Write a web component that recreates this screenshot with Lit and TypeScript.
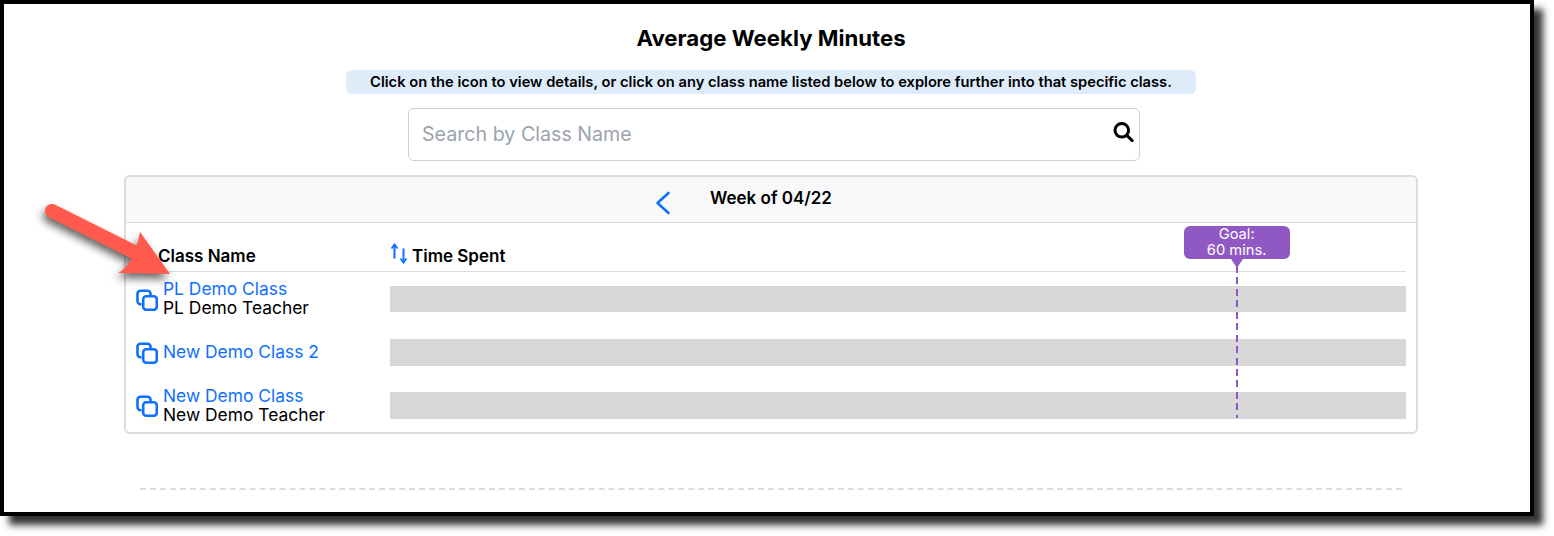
import { LitElement, html, css, svg } from "lit";
import { customElement } from "lit/decorators.js";

const BLUE = "#0f6fff";
const GOAL_MINS = 60;
const SCALE_MINS = 72;

const classes = [
  { name: "PL Demo Class", teacher: "PL Demo Teacher" },
  { name: "New Demo Class 2", teacher: "" },
  { name: "New Demo Class", teacher: "New Demo Teacher" },
];

const copyIcon = svg`
  <svg class="copy" viewBox="0 0 22 22" width="22" height="22" fill="none" stroke=${BLUE} stroke-width="2.6">
    <path d="M5.5 15.2H4.4A2.9 2.9 0 0 1 1.5 12.3V4.6A2.9 2.9 0 0 1 4.4 1.7H11.6A2.9 2.9 0 0 1 14.5 4.6V7" />
    <rect x="7.2" y="7.2" width="13.6" height="13.6" rx="3" />
  </svg>`;

const sortIcon = svg`
  <svg class="sort" viewBox="0 0 18 21" width="18" height="21" fill="none" stroke=${BLUE} stroke-width="2">
    <path d="M4.5 15.5V1.5" />
    <path d="M1.5 5.5L4.5 1.5L7.5 5.5" stroke-width="1.8" />
    <path d="M13.5 5.5v14" />
    <path d="M10.5 15.5L13.5 19.5L16.5 15.5" stroke-width="1.8" />
  </svg>`;

const searchIcon = svg`
  <svg class="search-icon" viewBox="0 0 21 20" width="21" height="20" fill="none" stroke="#000" stroke-width="3">
    <circle cx="8.8" cy="8.3" r="6.8" />
    <path d="M13.8 13.4l5.4 5.2" stroke-linecap="round" />
  </svg>`;

const chevron = svg`
  <svg class="chevron" viewBox="0 0 16 24" width="16" height="24" fill="none" stroke=${BLUE} stroke-width="2.6">
    <path d="M13.5 2L2.5 12l11 10" stroke-linecap="round" stroke-linejoin="round" />
  </svg>`;

const arrow = svg`
  <svg class="arrow" viewBox="0 0 140 90" width="140" height="90">
    <path d="M12 11L106 58" stroke="#ff5a4d" stroke-width="14" stroke-linecap="round" />
    <path d="M100 32L130 74L78 73Q94 65 100 32Z" fill="#ff5a4d" />
  </svg>`;

@customElement("app-root")
export class AppRoot extends LitElement {
  static styles = css`
    :host {
      display: block;
      height: 536px;
      background: #fff;
      font-family: Inter, "Open Sans", sans-serif;
      color: #000;
    }

    .frame {
      position: relative;
      box-sizing: border-box;
      width: 1534px;
      height: 516px;
      border: 4px solid #000;
      background: #fff;
      box-shadow: 9px 9px 7px rgba(0, 0, 0, 0.8);
      display: flex;
      flex-direction: column;
      align-items: center;
      padding: 20px 0 0 8px;
    }

    h1 {
      margin: 0;
      font-size: 22.2px;
      line-height: 28px;
      font-weight: 700;
    }

    .info {
      box-sizing: border-box;
      width: 850px;
      height: 24px;
      margin-top: 18px;
      background: #deebf9;
      border-radius: 6px;
      text-align: center;
      font-size: 14.7px;
      line-height: 24px;
      font-weight: 600;
    }

    .search {
      box-sizing: border-box;
      width: 732px;
      height: 53px;
      margin: 14px 0 0 6px;
      padding: 0 5px 2px 13px;
      border: 1px solid #cfcfcf;
      border-radius: 6px;
      display: flex;
      align-items: center;
      justify-content: space-between;
      font-size: 19.65px;
      color: #9ca3af;
    }

    .search-icon {
      margin-top: -3px;
    }

    .card {
      box-sizing: border-box;
      width: 1294px;
      height: 259px;
      margin-top: 14px;
      border: 2px solid #dcdcdc;
      border-radius: 6px;
    }

    .week {
      box-sizing: border-box;
      height: 46px;
      background: #f7f8fa;
      border-bottom: 1px solid #dcdcdc;
      border-radius: 4px 4px 0 0;
      display: flex;
      align-items: center;
      padding-left: 529px;
      font-size: 17px;
      font-weight: 600;
    }

    .week span {
      margin-left: 39px;
      margin-top: -3px;
    }

    .chevron {
      margin-top: 6px;
    }

    .table {
      position: relative;
      margin: 0 10px;
    }

    .head {
      box-sizing: border-box;
      height: 49px;
      border-bottom: 1px solid #dcdcdc;
      display: grid;
      grid-template-columns: 254px 1fr;
      align-items: end;
      padding-bottom: 4px;
      font-size: 17px;
      font-weight: 600;
      line-height: 22px;
    }

    .head .name {
      padding-left: 22px;
    }

    .head .time {
      display: flex;
      align-items: flex-end;
      gap: 4px;
    }

    .sort {
      margin-bottom: 3px;
    }

    .row {
      height: 53px;
      display: grid;
      grid-template-columns: 254px 1fr;
      align-items: center;
    }

    .who {
      display: flex;
      align-items: center;
      gap: 5px;
      font-size: 17.4px;
      line-height: 18.5px;
    }

    .who a {
      display: block;
      color: #0f6fff;
      text-decoration: none;
    }

    .row + .row .text {
      margin-top: 2px;
    }

    .copy {
      flex: none;
      margin-top: 3px;
    }

    .bar {
      height: 26px;
      margin-top: 1px;
      background: #d8d8d8;
    }

    .row + .row .bar {
      height: 27px;
      margin-top: 2px;
    }

    .chart {
      position: absolute;
      left: 254px;
      right: 0;
      top: 0;
      bottom: 13px;
      pointer-events: none;
    }

    .goal {
      position: absolute;
      top: 0;
      bottom: 0;
      width: 0;
    }

    .goal .bubble {
      position: absolute;
      top: 3px;
      left: -53px;
      width: 106px;
      height: 33px;
      background: #9058c3;
      border-radius: 6px;
      color: #fff;
      font-size: 14.7px;
      line-height: 16px;
      text-align: center;
    }

    .goal .bubble::after {
      content: "";
      position: absolute;
      left: 47px;
      top: 33px;
      border: 6px solid transparent;
      border-top: 9px solid #9058c3;
      border-bottom: 0;
    }

    .goal .line {
      position: absolute;
      top: 43px;
      bottom: 0;
      left: -1px;
      width: 2px;
      background: repeating-linear-gradient(#9058c3 0 7px, transparent 7px 11.45px);
    }

    .rule {
      width: 1262px;
      margin-top: 54px;
      border-top: 2px dashed #dcdcdc;
    }

    .arrow {
      position: absolute;
      left: 36px;
      top: 196px;
      overflow: visible;
      filter: drop-shadow(-2px 5px 4px rgba(0, 0, 0, 0.6));
    }
  `;

  render() {
    const goalLeft = (GOAL_MINS / SCALE_MINS) * 100;
    return html`
      <div class="frame">
        <h1>Average Weekly Minutes</h1>
        <div class="info">
          Click on the icon to view details, or click on any class name listed below to explore further into that specific class.
        </div>
        <div class="search">Search by Class Name ${searchIcon}</div>
        <div class="card">
          <div class="week">${chevron}<span>Week of 04/22</span></div>
          <div class="table">
            <div class="head">
              <div class="name">Class Name</div>
              <div class="time">${sortIcon}<span>Time Spent</span></div>
            </div>
            ${classes.map(
              (c) => html`
                <div class="row">
                  <div class="who">
                    ${copyIcon}
                    <div class="text">
                      <a href="#">${c.name}</a>
                      ${c.teacher ? html`<div>${c.teacher}</div>` : ""}
                    </div>
                  </div>
                  <div class="bar"></div>
                </div>
              `
            )}
            <div class="chart">
              <div class="goal" style="left: ${goalLeft}%">
                <div class="bubble">Goal:<br />60 mins.</div>
                <div class="line"></div>
              </div>
            </div>
          </div>
        </div>
        <div class="rule"></div>
        ${arrow}
      </div>
    `;
  }
}
